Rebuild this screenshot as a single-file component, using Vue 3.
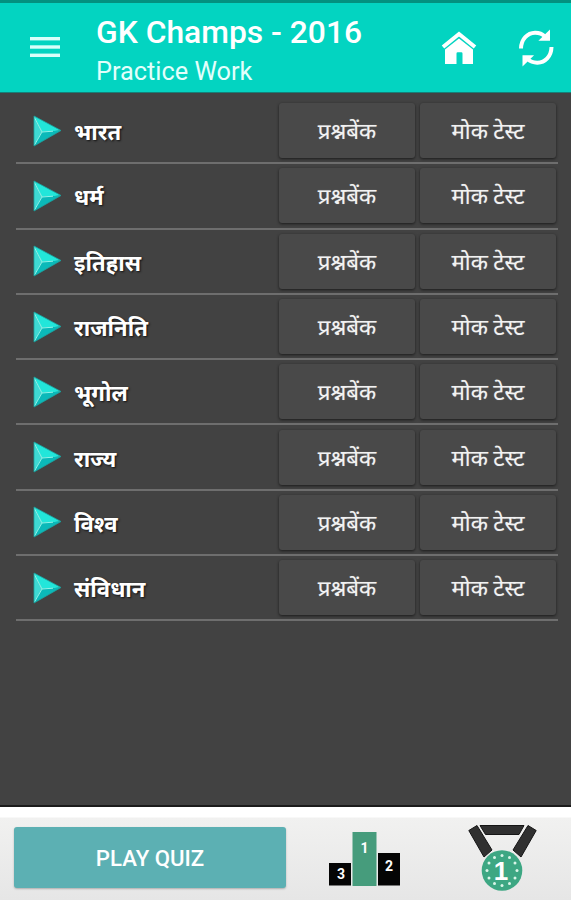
<template>
  <div class="screen">
    <header class="toolbar">
      <button class="icon-button menu" aria-label="Menu">
        <svg width="30" height="22" viewBox="0 0 30 22" fill="#d9fffa">
          <rect y="1" width="30" height="3.4" />
          <rect y="9.3" width="30" height="3.4" />
          <rect y="17.6" width="30" height="3.4" />
        </svg>
      </button>
      <div class="titles">
        <h1 class="title">GK Champs - 2016</h1>
        <p class="subtitle">Practice Work</p>
      </div>
      <button class="icon-button home" aria-label="Home">
        <svg width="36" height="34" viewBox="0 0 36 34">
          <path d="M2 16 18 3 34 16" fill="none" stroke="#fff" stroke-width="4" />
          <path d="M4 18.500 18 7.500 32 18.500V33H21.500V22.500q0-1.200-1.200-1.200h-3.600q-1.200 0-1.200 1.200V33H4z" fill="#fff" />
        </svg>
      </button>
      <button class="icon-button sync" aria-label="Refresh">
        <svg width="36" height="38" viewBox="0 0 36 38">
          <path d="M3 19.500C3.200 10 9.500 4 17 3.800 21.500 3.700 24.500 5.200 27 7.600" fill="none" stroke="#fff" stroke-width="4" />
          <path d="M32 .5V11.800H20.400z" fill="#fff" />
          <path d="M33.500 18C33.300 27.500 27 33.500 19.500 33.700 15 33.800 12 32.300 9.500 29.900" fill="none" stroke="#fff" stroke-width="4" />
          <path d="M4.500 37.500V26.200H16.100z" fill="#fff" />
        </svg>
      </button>
    </header>

    <main class="content">
      <ul class="topics">
        <li v-for="topic in topics" :key="topic" class="topic">
          <svg class="marker" width="29" height="32" viewBox="0 0 29 32">
            <path d="M1 1 9 17 1 31z" fill="#3fd9d3" />
            <path d="M1 1 28 15.500 9 17z" fill="#22e6da" />
            <path d="M1 31 9 17 28 15.500z" fill="#0bb9b9" />
            <path d="M1.500 2.500 9 17 1.500 30M9 17 20 16.200" fill="none" stroke="#8ff5ea" stroke-width="1" />
            <path d="M1 1 28 15.500 1 31z" fill="none" stroke="#1aa5a1" stroke-width=".8" />
          </svg>
          <span class="name">{{ topic }}</span>
          <button class="action">प्रश्नबेंक</button>
          <button class="action">मोक टेस्ट</button>
        </li>
      </ul>
    </main>

    <footer class="bottom-bar">
      <button class="play">PLAY QUIZ</button>
      <svg class="podium" width="71" height="56" viewBox="0 0 71 56">
        <rect y="32" width="22" height="22.500" fill="#050505" />
        <rect x="23.500" y="1" width="24" height="54" fill="#469c7c" />
        <rect x="49" y="22" width="22" height="32.500" fill="#050505" />
        <g class="digits">
          <text x="12" y="47.500">3</text>
          <text x="35.500" y="22">1</text>
          <text x="60" y="40">2</text>
        </g>
      </svg>
      <svg class="medal" width="69" height="68" viewBox="0 0 69 68">
        <g fill="#303030" stroke="#151515" stroke-width="1">
          <path d="M12 1.500H56L51 10.500H17.500z" />
          <path d="M.8 6.500 9 1.500 24 26 16 33z" />
          <path d="M68.200 6.500 60 1.500 45 26 53 33z" />
        </g>
        <circle cx="34" cy="46.500" r="20.300" fill="#3da783" />
        <circle
          v-for="dot in medalDots"
          :key="dot.id"
          :cx="dot.x"
          :cy="dot.y"
          r="1.500"
          fill="#d9f5e8"
        />
        <text class="rank" x="33" y="55.500">1</text>
      </svg>
    </footer>
  </div>
</template>

<script setup>
const topics = ['भारत', 'धर्म', 'इतिहास', 'राजनिति', 'भूगोल', 'राज्य', 'विश्व', 'संविधान']

const medalDots = Array.from({ length: 12 }, (_, i) => {
  const angle = (i * Math.PI) / 6
  return {
    id: i,
    x: 34 + 15 * Math.cos(angle),
    y: 46.5 + 15 * Math.sin(angle)
  }
})
</script>

<style>
body {
  margin: 0;
}
</style>

<style scoped>
.screen {
  display: flex;
  flex-direction: column;
  width: 571px;
  height: 900px;
  overflow: hidden;
  background: #424242;
  font-family: Roboto, 'Noto Sans', sans-serif;
}

button {
  padding: 0;
  border: 0;
  font-family: inherit;
}

.toolbar {
  display: flex;
  align-items: flex-start;
  box-sizing: border-box;
  height: 93px;
  border-top: 3px solid #03917f;
  border-bottom: 1px solid #168078;
  background: #03d4c1;
  color: #fff;
}

.icon-button {
  display: flex;
  background: none;
}

.menu {
  margin: 33px 0 0 30px;
}

.titles {
  flex: 1;
  margin-left: 36px;
}

.title {
  margin: 9px 0 0;
  font-size: 31.8px;
  font-weight: 500;
  line-height: 40px;
  white-space: nowrap;
}

.subtitle {
  margin: 5px 0 0;
  color: #e2fffb;
  font-size: 25.3px;
  line-height: 30px;
}

.home {
  margin: 28px 41px 0 0;
}

.sync {
  margin: 26px 17px 0 0;
}

.content {
  flex: 1;
  padding: 6px 13px 0 16px;
}

.topics {
  margin: 0;
  padding: 0;
  list-style: none;
}

.topic {
  display: flex;
  align-items: center;
  box-sizing: border-box;
  height: 65.3px;
  border-bottom: 2px solid #6e6e6e;
}

.marker {
  margin-left: 17px;
}

.name {
  flex: 1;
  margin-left: 12px;
  padding-top: 1px;
  color: #fff;
  font-size: 22.1px;
  font-weight: 700;
  text-shadow: 1px 1px 2px #111;
}

.action {
  width: 136px;
  height: 55px;
  margin-right: 5px;
  border-radius: 3px;
  background: #494949;
  box-shadow: 0 1px 3px rgba(0, 0, 0, 0.6);
  color: #f2f2f2;
  font-size: 22.3px;
  text-shadow: 0 0 1px rgba(255, 255, 255, 0.4);
}

.action:last-child {
  margin-right: 2px;
}

.bottom-bar {
  display: flex;
  align-items: flex-start;
  box-sizing: border-box;
  height: 95px;
  border-top: 2px solid #1b1b1b;
  background: linear-gradient(#fff 10px, #f1f1f0 11px, #e6e6e6);
}

.play {
  width: 272px;
  height: 61px;
  margin: 20px 0 0 14px;
  border-radius: 3px;
  background: #5cb0b3;
  box-shadow: 0 1px 2px rgba(0, 0, 0, 0.25);
  color: #fff;
  font-size: 22.2px;
  font-weight: 500;
}

.podium {
  margin: 24px 0 0 43px;
}

.digits {
  fill: #fff;
  font-family: Roboto, sans-serif;
  font-size: 14px;
  font-weight: 700;
  text-anchor: middle;
}

.medal {
  margin: 17px 0 0 68px;
}

.rank {
  fill: #fff;
  font-family: 'Liberation Sans', sans-serif;
  font-size: 26px;
  font-weight: 700;
  text-anchor: middle;
}
</style>
